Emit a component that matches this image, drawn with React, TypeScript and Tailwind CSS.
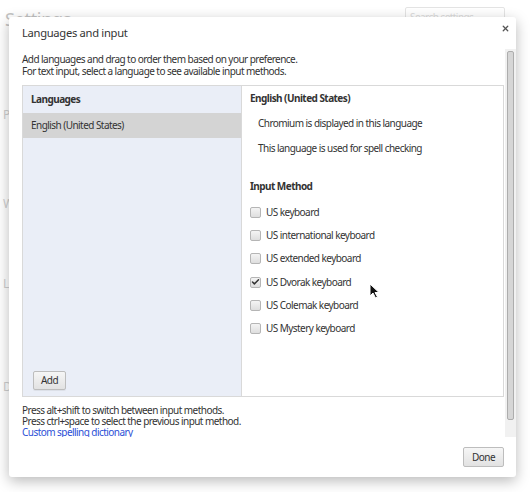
import { Check, X } from "lucide-react"

const methods = [
	{ name: "US keyboard", on: false },
	{ name: "US international keyboard", on: false },
	{ name: "US extended keyboard", on: false },
	{ name: "US Dvorak keyboard", on: true },
	{ name: "US Colemak keyboard", on: false },
	{ name: "US Mystery keyboard", on: false },
]

function Box({ on }: { on: boolean }) {
	return (
		<span className="flex h-[11px] w-[11px] shrink-0 items-center justify-center rounded-[2px] border border-[#b5b5b5] bg-gradient-to-b from-[#f4f4f4] to-[#dedede]">
			{on && <Check className="h-[10px] w-[10px] text-[#333]" strokeWidth={4} />}
		</span>
	)
}

export default function App() {
	return (
		<div className="relative h-[492px] w-[530px] overflow-hidden bg-white font-['Noto_Sans',sans-serif] text-[10px] tracking-[-0.55px] text-[#333]">
			{/* faded settings page behind the dialog */}
			<div className="flex items-start justify-between pl-[5px] pr-[25px] pt-[6px]">
				<div className="text-[18px] leading-[26px] tracking-[-0.3px] text-[#c4c4c4]">Settings</div>
				<div className="mt-[1px] h-[21px] w-[100px] rounded-[2px] border border-[#e4e4e4] px-[4px] text-[10px] leading-[19px] text-[#dcdcdc]">
					Search settings
				</div>
			</div>
			<div className="flex flex-col pl-[3px] text-[12px] text-[#cfcfcf]">
				<span className="mt-[74px]">P</span>
				<span className="mt-[71px]">W</span>
				<span className="mt-[62px]">L</span>
				<span className="mt-[85px]">D</span>
			</div>

			{/* dialog */}
			<div className="absolute left-[9px] top-[17px] flex h-[460px] w-[507px] flex-col rounded-[3px] bg-white shadow-[0_4px_14px_rgba(0,0,0,0.28)]">
				<div className="flex h-[32px] items-start justify-between pl-[13px] pr-[6px]">
					<span className="pt-[7px] text-[11.2px] leading-[18px] tracking-[-0.3px] text-[#333]">Languages and input</span>
					<X className="mt-[7px] h-[9px] w-[9px] text-[#555]" strokeWidth={3.5} />
				</div>

				<div className="flex h-[388px] overflow-hidden">
					<div className="flex flex-1 flex-col overflow-hidden pl-[13px] pr-[1px] pt-[4px]">
						<p className="leading-[12px]">
							Add languages and drag to order them based on your preference.
							<br />
							For text input, select a language to see available input methods.
						</p>

						<div className="mt-[8px] flex h-[312px] shrink-0 border border-[#d9d9d9]">
							<div className="flex w-[219px] flex-col border-r border-[#d9d9d9] bg-[#eaeef7]">
								<div className="px-[8px] pb-[6px] pt-[6px] font-bold leading-[15px]">Languages</div>
								<div className="bg-[#d4d4d4] px-[8px] py-[5px] leading-[15px]">English (United States)</div>
								<div className="flex-1" />
								<div className="pb-[6px] pl-[10px]">
									<button className="h-[19px] rounded-[2px] border border-[#bdbdbd] bg-gradient-to-b from-[#f6f6f6] to-[#e2e2e2] px-[7px] text-[10px] leading-[17px] text-[#333] shadow-[0_1px_0_rgba(0,0,0,0.06)]">
										Add
									</button>
								</div>
							</div>
							<div className="flex flex-1 flex-col pl-[8px] pt-[5px]">
								<div className="font-bold leading-[15px]">English (United States)</div>
								<div className="mt-[10px] pl-[8px] leading-[15px]">Chromium is displayed in this language</div>
								<div className="mt-[10px] pl-[8px] leading-[15px]">This language is used for spell checking</div>
								<div className="mt-[23px] font-bold leading-[15px]">Input Method</div>
								<div className="mt-[11px] flex flex-col gap-[8.2px]">
									{methods.map((m) => (
										<label key={m.name} className="flex h-[15px] items-center gap-[5px] leading-[15px]">
											<Box on={m.on} />
											<span>{m.name}</span>
										</label>
									))}
								</div>
							</div>
						</div>

						<p className="mt-[8px] leading-[11px]">
							Press alt+shift to switch between input methods.
							<br />
							Press ctrl+space to select the previous input method.
							<br />
							<a className="text-[#2b4fd6]">Custom spelling dictionary</a>
						</p>
					</div>

					{/* scrollbar */}
					<div className="w-[11px] shrink-0 bg-[#f1f1f1] px-[2px] pb-[17px] pt-[2px]">
						<div className="h-full rounded-[2px] border border-[#adadad] bg-[#d6d6d6]" />
					</div>
				</div>

				<div className="flex flex-1 items-start justify-end pr-[12px] pt-[10px]">
					<button className="h-[20px] rounded-[2px] border border-[#bdbdbd] bg-gradient-to-b from-[#f6f6f6] to-[#e2e2e2] px-[8px] text-[10px] leading-[18px] text-[#333]">
						Done
					</button>
				</div>

				{/* mouse pointer */}
				<svg className="absolute left-[360px] top-[266px]" width="11" height="16" viewBox="0 0 11 16">
					<path d="M1 1 L1 13 L4 10 L6.5 15 L8.5 14 L6 9.5 L10 9.5 Z" fill="#111" stroke="#fff" strokeWidth="1" />
				</svg>
			</div>
		</div>
	)
}
